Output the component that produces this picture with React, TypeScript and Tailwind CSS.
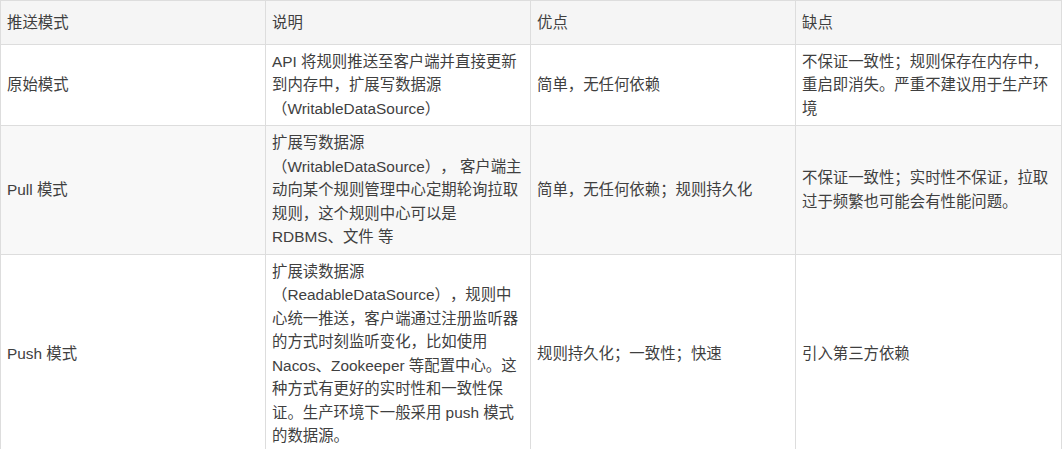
const HEAD = ['推送模式', '说明', '优点', '缺点'];

const ROWS: string[][] = [
  [
    '原始模式',
    'API 将规则推送至客户端并直接更新到内存中，扩展写数据源（WritableDataSource）',
    '简单，无任何依赖',
    '不保证一致性；规则保存在内存中，重启即消失。严重不建议用于生产环境',
  ],
  [
    'Pull 模式',
    '扩展写数据源（WritableDataSource）， 客户端主动向某个规则管理中心定期轮询拉取规则，这个规则中心可以是 RDBMS、文件 等',
    '简单，无任何依赖；规则持久化',
    '不保证一致性；实时性不保证，拉取过于频繁也可能会有性能问题。',
  ],
  [
    'Push 模式',
    '扩展读数据源（ReadableDataSource），规则中心统一推送，客户端通过注册监听器的方式时刻监听变化，比如使用 Nacos、Zookeeper 等配置中心。这种方式有更好的实时性和一致性保证。生产环境下一般采用 push 模式的数据源。',
    '规则持久化；一致性；快速',
    '引入第三方依赖',
  ],
];

export default function App() {
  return (
    <div className="min-h-screen bg-white font-['Liberation_Sans','Noto_Sans_CJK_SC',sans-serif] text-[15.4px] leading-[23.5px] text-[#3f3f3f] [text-spacing-trim:space-all]">
      <table className="table-fixed border-collapse w-[1061px]">
        <colgroup>
          <col className="w-[265px]" />
          <col className="w-[265px]" />
          <col className="w-[265px]" />
          <col className="w-[266px]" />
        </colgroup>
        <thead>
          <tr className="bg-[#f5f5f5]">
            {HEAD.map((h) => (
              <th
                key={h}
                className="border border-[#dddddd] px-[6px] py-[9.5px] text-left font-normal align-middle"
              >
                {h}
              </th>
            ))}
          </tr>
        </thead>
        <tbody>
          {ROWS.map((row, i) => (
            <tr key={i} className={i % 2 === 1 ? 'bg-[#f8f8f8]' : 'bg-white'}>
              {row.map((cell, j) => (
                <td
                  key={j}
                  className="border border-[#dddddd] px-[6px] py-[5px] align-middle break-words"
                >
                  {cell}
                </td>
              ))}
            </tr>
          ))}
        </tbody>
      </table>
    </div>
  );
}
